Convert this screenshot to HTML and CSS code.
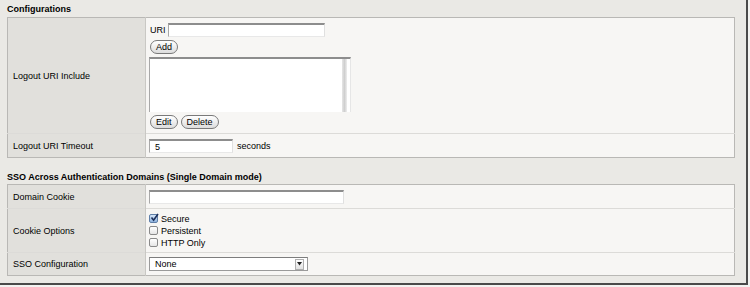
FILE: index.html
```html
<!DOCTYPE html>
<html lang="en">

<head>
	<meta charset="UTF-8" />
	<title>Configurations</title>
	<link rel="stylesheet" href="styles.css">
</head>

<body>
	<div class="frame">
		<h3 class="section-title">Configurations</h3>
		<table class="config-table">
			<tr class="row-include">
				<td class="label">Logout URI Include</td>
				<td class="value">
					<div class="uri-line">
						<span>URI</span>
						<span class="text-input uri-input"></span>
					</div>
					<div class="btn-line">
						<span class="pill-btn">Add</span>
					</div>
					<div class="listbox">
						<span class="listbox-track"></span>
					</div>
					<div class="btn-line">
						<span class="pill-btn">Edit</span>
						<span class="pill-btn">Delete</span>
					</div>
				</td>
			</tr>
			<tr class="row-timeout">
				<td class="label">Logout URI Timeout</td>
				<td class="value">
					<div class="inline-line">
						<span class="text-input timeout-input">5</span>
						<span>seconds</span>
					</div>
				</td>
			</tr>
		</table>

		<h3 class="section-title second">SSO Across Authentication Domains (Single Domain mode)</h3>
		<table class="config-table">
			<tr class="row-domain">
				<td class="label">Domain Cookie</td>
				<td class="value">
					<span class="text-input domain-input"></span>
				</td>
			</tr>
			<tr class="row-options">
				<td class="label">Cookie Options</td>
				<td class="value">
					<div class="check-line">
						<span class="check checked">
							<svg width="9" height="9" viewBox="0 0 9 9">
								<path d="M1.5 4.6 L3.6 7.2 L8 1" fill="none" stroke="#1c2f5a" stroke-width="1.6" />
							</svg>
						</span>
						<span>Secure</span>
					</div>
					<div class="check-line">
						<span class="check"></span>
						<span>Persistent</span>
					</div>
					<div class="check-line">
						<span class="check"></span>
						<span>HTTP Only</span>
					</div>
				</td>
			</tr>
			<tr class="row-sso">
				<td class="label">SSO Configuration</td>
				<td class="value">
					<div class="select-box">
						<span>None</span>
						<span class="select-arrow">
							<svg width="5" height="4" viewBox="0 0 5 4">
								<path d="M0 0 L5 0 L2.5 3.5 Z" fill="#222" />
							</svg>
						</span>
					</div>
				</td>
			</tr>
		</table>
	</div>
</body>

</html>
```

FILE: styles.css
```css
body {
	margin: 0;
	background-color: #f3f3f1;
	font-family: "Liberation Sans", Arial, sans-serif;
	font-size: 9px;
	color: #000;
}

.frame {
	width: 739px;
	height: 283px;
	padding-left: 7px;
	background-color: #eae9e5;
	border-right: 2px solid #4a4a4a;
	border-bottom: 2px solid #4a4a4a;
}

.section-title {
	margin: 0;
	height: 17px;
	padding-top: 4px;
	box-sizing: border-box;
	font-size: 9px;
	font-weight: bold;
}

.section-title.second {
	height: 26px;
	padding-top: 14px;
}

.config-table {
	width: 728px;
	border-collapse: collapse;
	border: 1px solid #b9b8b5;
}

.config-table td {
	padding: 0;
	border-top: 1px solid #dcdbd8;
}

.config-table tr:first-child td {
	border-top: none;
}

.label {
	width: 132px;
	padding-left: 5px !important;
	background-color: #e1e0dc;
	border-right: 1px solid #c9c8c4;
	vertical-align: middle;
}

.value {
	background-color: #f7f6f4;
	padding-left: 3px !important;
	vertical-align: middle;
}

.row-include td {
	height: 115px;
}

.row-timeout td {
	height: 23px;
}

.row-domain td {
	height: 23px;
}

.row-options td {
	height: 43px;
}

.row-sso td {
	height: 22px;
}

.text-input {
	display: inline-block;
	box-sizing: border-box;
	height: 14px;
	padding-left: 5px;
	line-height: 13px;
	background-color: #fff;
	border-top: 2px solid #8d8d8d;
	border-left: 1px solid #a8a8a8;
	border-right: 1px solid #e0e0e0;
	border-bottom: 1px solid #e8e8e8;
	vertical-align: middle;
}

.uri-line {
	display: flex;
	align-items: center;
	gap: 2px;
	padding-left: 1px;
}

.uri-input {
	width: 157px;
}

.btn-line {
	display: flex;
	gap: 3px;
	margin-top: 3px;
	padding-left: 1px;
}

.pill-btn {
	display: inline-block;
	height: 12px;
	line-height: 12px;
	padding: 0 5px;
	border: 1px solid #7a7a7a;
	border-radius: 7px;
	background: linear-gradient(#ffffff, #dcdcdc);
}

.listbox {
	display: flex;
	justify-content: flex-end;
	width: 202px;
	height: 55px;
	margin-top: 3px;
	box-sizing: border-box;
	background-color: #fff;
	border-top: 2px solid #8d8d8d;
	border-left: 1px solid #a8a8a8;
	border-right: 1px solid #e6e6e6;
}

.listbox-track {
	width: 5px;
	margin-right: 3px;
	background: linear-gradient(to right, #e6e6e6, #cfcfcf, #eeeeee);
}

.inline-line {
	display: flex;
	align-items: center;
	gap: 4px;
}

.timeout-input {
	width: 84px;
}

.domain-input {
	width: 195px;
}

.check-line {
	display: flex;
	align-items: center;
	gap: 3px;
	height: 12px;
}

.check {
	display: inline-block;
	box-sizing: border-box;
	width: 9px;
	height: 9px;
	border: 1px solid #8a8a8a;
	border-radius: 2px;
	background: linear-gradient(#ffffff, #e6e6e6);
	position: relative;
}

.check.checked {
	background: linear-gradient(#d6e6f8, #8fb4e0);
	border-color: #5f7fa8;
}

.check svg {
	position: absolute;
	left: 0;
	top: -2px;
}

.select-box {
	display: flex;
	align-items: center;
	justify-content: space-between;
	box-sizing: border-box;
	width: 159px;
	height: 14px;
	padding-left: 5px;
	padding-right: 3px;
	background-color: #fff;
	border: 1px solid #9a9a9a;
	border-top-color: #7d7d7d;
}

.select-arrow {
	display: flex;
	align-items: center;
	justify-content: center;
	width: 7px;
	height: 9px;
	border: 1px solid #b0b0b0;
	background: linear-gradient(#ffffff, #e2e2e2);
}
```
